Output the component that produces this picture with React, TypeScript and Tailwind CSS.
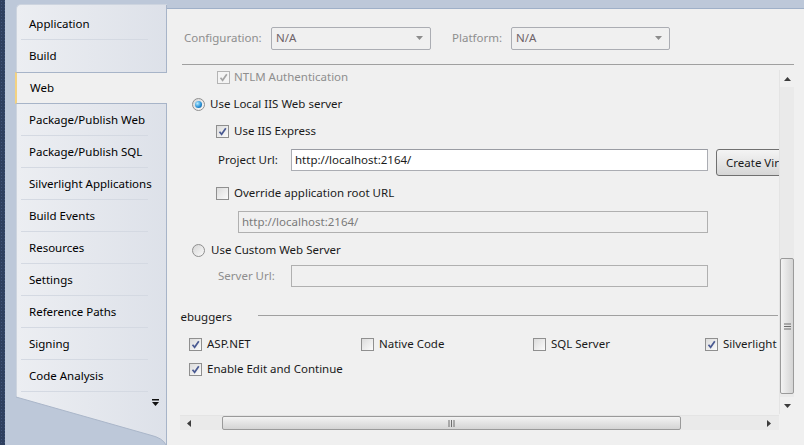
import React from "react";

const navItems = [
  "Application",
  "Build",
  "Web",
  "Package/Publish Web",
  "Package/Publish SQL",
  "Silverlight Applications",
  "Build Events",
  "Resources",
  "Settings",
  "Reference Paths",
  "Signing",
  "Code Analysis",
];

function Check({ checked, disabled }: { checked?: boolean; disabled?: boolean }) {
  return (
    <span
      className={`w-[13px] h-[13px] shrink-0 border flex items-center justify-center ${
        disabled ? "border-[#b4b4b4] bg-[#f4f4f4]" : "border-[#8f8f8f] bg-gradient-to-br from-[#dcdcdc] to-[#fbfbfb]"
      }`}
    >
      {checked && (
        <svg width="11" height="11" viewBox="0 0 11 11">
          <path
            d="M2.5 5.8 L4.6 8.3 L8.8 2.2"
            fill="none"
            stroke={disabled ? "#a5a5a5" : "#4a5a92"}
            strokeWidth="1.7"
          />
        </svg>
      )}
    </span>
  );
}

function Radio({ checked }: { checked?: boolean }) {
  return (
    <span className="w-[13px] h-[13px] shrink-0 rounded-full border border-[#8f8f8f] bg-gradient-to-br from-[#d6d6d6] to-[#fafafa] flex items-center justify-center">
      {checked && (
        <span className="w-[7px] h-[7px] rounded-full bg-[radial-gradient(circle_at_35%_35%,#b8ecff,#2a93d8_55%,#0b4a86)]" />
      )}
    </span>
  );
}

function Select({ width }: { width: string }) {
  return (
    <div
      className={`${width} h-[23px] shrink-0 border border-[#abadb3] rounded-[2px] bg-[#f0f0f0] flex items-center justify-between pl-[4px] pr-[7px]`}
    >
      <span className="text-[#6e6268]">N/A</span>
      <svg width="7" height="4" viewBox="0 0 7 4">
        <path d="M0 0 H7 L3.5 4 Z" fill="#8c8c8c" />
      </svg>
    </div>
  );
}

function Nav() {
  return (
    <div className="w-[151px] shrink-0 mt-[4px] flex flex-col rounded-tl-[5px] border-t border-l border-[#cdd4df] bg-gradient-to-r from-[#eceef2] to-[#dde1e9]">
      <div className="h-[3px] border-r border-[#a7b4c8]" />
      {navItems.map((item, i) => {
        const selected = item === "Web";
        const beforeSelected = navItems[i + 1] === "Web";
        if (selected)
          return (
            <div
              key={item}
              className="h-[32px] -ml-[2px] bg-[#f0f0f0] border-y border-l-2 border-y-[#a7b4c8] border-l-[#f3d282] flex items-center pl-[13px] text-black"
            >
              {item}
            </div>
          );
        return (
          <div key={item} className="h-[32px] flex flex-col border-r border-[#a7b4c8]">
            <div className="flex-1 flex items-center pl-[12px] text-black">{item}</div>
            {!beforeSelected && <div className="h-px ml-[4px] mr-[18px] bg-[#d4d9e2]" />}
          </div>
        );
      })}
      <div className="flex-1 relative border-r border-[#a7b4c8]">
        <svg width="151" height="53" viewBox="0 0 151 53" className="block -ml-px">
          <path d="M0 5 L134 43 Q147 46 150 53 L0 53 Z" fill="#bdc8d9" />
          <path d="M0 5 L134 43 Q147 46 150 53" fill="none" stroke="#aab6c9" strokeWidth="1" />
          <rect x="136" y="7" width="7" height="1.5" fill="#111" />
          <path d="M136 10 H143 L139.5 14 Z" fill="#111" />
        </svg>
      </div>
    </div>
  );
}

function VScroll() {
  return (
    <div className="w-[15px] h-[344px] shrink-0 flex flex-col bg-[#f0f0f0] border-l border-[#e4e4e4]">
      <div className="h-[17px] flex items-center justify-center">
        <svg width="7" height="4" viewBox="0 0 7 4">
          <path d="M0 4 L3.5 0 L7 4 Z" fill="#3c3c3c" />
        </svg>
      </div>
      <div className="flex-1 flex flex-col bg-[#eaeaea]">
        <div className="h-[171px]" />
        <div className="h-[136px] rounded-[2px] border border-[#9a9a9a] bg-gradient-to-r from-[#f3f3f3] to-[#d4d4d4] flex items-center justify-center">
          <svg width="7" height="7" viewBox="0 0 7 7">
            <path d="M0 1 H7 M0 3.5 H7 M0 6 H7" stroke="#6e6e6e" strokeWidth="1" />
          </svg>
        </div>
      </div>
      <div className="h-[17px] flex items-center justify-center">
        <svg width="7" height="4" viewBox="0 0 7 4">
          <path d="M0 0 H7 L3.5 4 Z" fill="#3c3c3c" />
        </svg>
      </div>
    </div>
  );
}

function HScroll() {
  return (
    <div className="w-[599px] h-[15px] flex bg-[#eaeaea] border-t border-[#e4e4e4]">
      <div className="w-[18px] flex items-center justify-center">
        <svg width="4" height="7" viewBox="0 0 4 7">
          <path d="M4 0 L0 3.5 L4 7 Z" fill="#3c3c3c" />
        </svg>
      </div>
      <div className="w-[24px]" />
      <div className="w-[459px] rounded-[2px] border border-[#9a9a9a] bg-gradient-to-b from-[#f3f3f3] to-[#d4d4d4] flex items-center justify-center">
        <svg width="7" height="7" viewBox="0 0 7 7">
          <path d="M1 0 V7 M3.5 0 V7 M6 0 V7" stroke="#6e6e6e" strokeWidth="1" />
        </svg>
      </div>
      <div className="flex-1 flex items-center justify-end pr-[8px]">
        <svg width="4" height="7" viewBox="0 0 4 7">
          <path d="M0 0 L4 3.5 L0 7 Z" fill="#3c3c3c" />
        </svg>
      </div>
    </div>
  );
}

function CheckRow({ label, checked, w }: { label: string; checked?: boolean; w?: string }) {
  return (
    <div className={`flex items-center gap-[5px] shrink-0 ${w ?? ""}`}>
      <Check checked={checked} />
      <span>{label}</span>
    </div>
  );
}

export default function App() {
  return (
    <div className="w-[804px] h-[445px] flex overflow-hidden bg-[#bdc8d9] text-[11.5px] leading-none font-['Segoe_UI','Noto_Sans',sans-serif] text-[#1a1a1a]">
      {/* dark desktop edge */}
      <div className="w-[16px] shrink-0 flex">
        <div className="w-[5px] bg-[#2e3f5e] bg-[radial-gradient(#41557a_1px,transparent_1px)] bg-[length:3px_3px]" />
      </div>

      <Nav />

      {/* page */}
      <div className="flex-1 mt-[8px] flex flex-col bg-[#f0f0f0] border-t border-[#9fb0c8]">
        <div className="h-[55px] flex items-center pl-[17px] pt-[3px]">
          <span className="w-[87px] shrink-0 text-[#8e8e8e]">Configuration:</span>
          <Select width="w-[160px]" />
          <span className="w-[59px] shrink-0 ml-[21px] text-[#8e8e8e]">Platform:</span>
          <Select width="w-[159px]" />
        </div>
        <div className="h-px ml-[15px] mr-[10px] bg-[#a0a0a0]" />

        <div className="mt-[5px] pl-[13px] flex">
          <div className="w-[599px] h-[345px] shrink-0 overflow-hidden flex flex-col">
            <div className="h-[14px] pl-[37px] flex items-center gap-[4px] text-[#8e8e8e]">
              <Check checked disabled />
              <span>NTLM Authentication</span>
            </div>
            <div className="h-[14px] mt-[13px] pl-[12px] flex items-center gap-[5px]">
              <Radio checked />
              <span>Use Local IIS Web server</span>
            </div>
            <div className="h-[14px] mt-[13px] pl-[36px] flex items-center">
              <CheckRow label="Use IIS Express" checked />
            </div>
            <div className="h-[27px] mt-[11px] flex items-start">
              <span className="w-[111px] shrink-0 pl-[38px] h-[22px] flex items-center">Project Url:</span>
              <div className="w-[417px] shrink-0 h-[22px] border border-[#abadb3] border-t-[#9a9ca3] bg-white flex items-center pl-[3px]">
                http://localhost:2164/
              </div>
              <div className="ml-[8px] w-[80px] h-[27px] shrink-0 rounded-[3px] border border-[#707070] bg-gradient-to-b from-[#f4f4f4] via-[#e6e6e6] to-[#d6d6d6] flex items-center pl-[9px] whitespace-nowrap overflow-hidden">
                Create Virtual Directory
              </div>
            </div>
            <div className="h-[14px] mt-[10px] pl-[36px] flex items-center">
              <CheckRow label="Override application root URL" />
            </div>
            <div className="h-[22px] mt-[11px] ml-[58px] w-[470px] shrink-0 border border-[#b0b0b0] bg-[#f0f0f0] flex items-center pl-[3px] text-[#7a7a7a]">
              http://localhost:2164/
            </div>
            <div className="h-[14px] mt-[10px] pl-[12px] flex items-center gap-[6px]">
              <Radio />
              <span>Use Custom Web Server</span>
            </div>
            <div className="h-[22px] mt-[8px] flex items-center">
              <span className="w-[111px] shrink-0 pl-[38px] text-[#8e8e8e]">Server Url:</span>
              <div className="w-[417px] shrink-0 h-[22px] border border-[#b0b0b0] bg-[#f0f0f0]" />
            </div>
            <div className="h-[14px] mt-[23px] flex items-center">
              <span className="-ml-[8px] w-[86px] shrink-0">Debuggers</span>
              <div className="w-[520px] shrink-0 h-px bg-[#a0a0a0] -mt-[3px]" />
            </div>
            <div className="h-[14px] mt-[13px] pl-[9px] flex items-center">
              <CheckRow label="ASP.NET" checked w="w-[172px]" />
              <CheckRow label="Native Code" w="w-[172px]" />
              <CheckRow label="SQL Server" w="w-[172px]" />
              <CheckRow label="Silverlight" checked />
            </div>
            <div className="h-[14px] mt-[11px] pl-[9px] flex items-center">
              <CheckRow label="Enable Edit and Continue" checked />
            </div>
          </div>
          <VScroll />
        </div>
        <div className="pl-[13px]">
          <HScroll />
        </div>
      </div>
    </div>
  );
}
